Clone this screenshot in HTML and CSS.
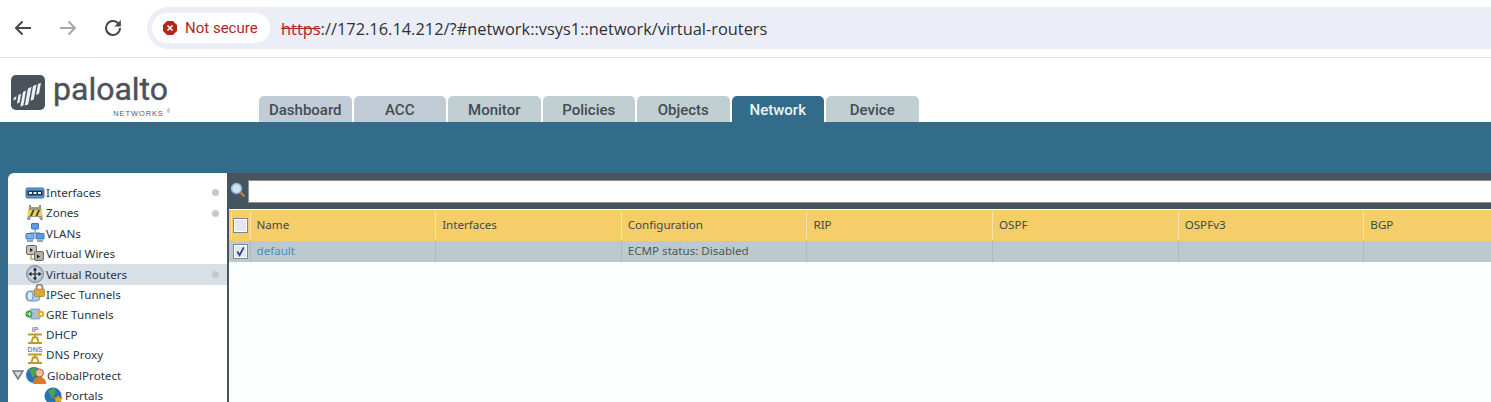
FILE: index.html
```html
<!DOCTYPE html>
<html lang="en">
<head>
    <meta charset="UTF-8">
    <title>Virtual Routers</title>
    <link rel="stylesheet" href="styles.css">
</head>
<body>

<div class="toolbar">
    <svg class="nav-icon" viewBox="0 0 24 24"><path d="M20 12H5M11.500 5.500L5 12l6.500 6.500" fill="none" stroke="#474747" stroke-width="2"/></svg>
    <svg class="nav-icon" viewBox="0 0 24 24"><path d="M4 12h15M12.500 5.500L19 12l-6.500 6.500" fill="none" stroke="#a8a8a8" stroke-width="2"/></svg>
    <svg class="nav-icon" viewBox="0 0 24 24"><path d="M19 12a7 7 0 1 1-2.200-5.100L19 9" fill="none" stroke="#474747" stroke-width="2"/><path d="M19.800 4v6.400h-6.400z" fill="#474747"/></svg>
    <div class="omnibox">
        <div class="chip">
            <svg class="chip-icon" viewBox="0 0 16 16"><path d="M5 1h6l4 4v6l-4 4H5l-4-4V5z" fill="#b3261e"/><path d="M5.500 5.500l5 5M10.500 5.500l-5 5" stroke="#fff" stroke-width="1.500"/></svg>
            <span>Not secure</span>
        </div>
        <div class="url"><span class="scheme">https</span>://172.16.14.212/?#network::vsys1::network/virtual-routers</div>
    </div>
</div>

<div class="top">
    <div class="logo">
        <svg class="logo-mark" width="34" height="35" viewBox="0 0 34 35">
            <rect width="34" height="35" rx="5" fill="#4a535c"/>
            <g fill="#eef0f1">
                <path d="M3 22.500l2.500-1-.7 3-2.500.8z"/>
                <path d="M7.500 20l2.600-1.200-1.600 9-2.600.8z"/>
                <path d="M12 17l3-1.500-2.600 15-3 1z"/>
                <path d="M17 13.500l3.500-1.700-3.300 17.700-3.400 1z"/>
                <path d="M22 11l3.500-1.500-2.800 15-3.200 1.300z"/>
                <path d="M27 9l3-1.200-2 11-3 1.300z"/>
            </g>
        </svg>
        <div class="logo-text">
            <div class="logo-name">paloalto</div>
            <div class="logo-sub">NETWORKS<sup>®</sup></div>
        </div>
    </div>
    <div class="tabs">
        <div class="tab tab-b">Dashboard</div>
        <div class="tab tab-b">ACC</div>
        <div class="tab">Monitor</div>
        <div class="tab">Policies</div>
        <div class="tab">Objects</div>
        <div class="tab active">Network</div>
        <div class="tab">Device</div>
    </div>
</div>

<div class="band"></div>

<div class="content">
    <div class="sidebar">
        <div class="item"><svg class="ico" viewBox="0 0 20 20"><rect x="1" y="5" width="18" height="10" rx="1.500" fill="#5d9bd6" stroke="#3b6ea5"/><rect x="2.500" y="7.500" width="15" height="5" fill="#23344e"/><path d="M4 9h3v2H4zM8.500 9h3v2h-3zM13 9h3v2h-3z" fill="#e8eef5"/></svg><span>Interfaces</span><i class="dot"></i></div>
        <div class="item"><svg class="ico" viewBox="0 0 20 20"><path d="M4 2h2v2H4zM14 2h2v2h-2z" fill="#8a8a82"/><path d="M2 17l2-13h12l2 13h-3l-1-3H6l-1 3z" fill="#9a9a90"/><path d="M3.500 7h13l.6 6H2.900z" fill="#ecd24a"/><path d="M5 13l2.500-6h2L7 13zM10.500 13l2.500-6h2l-2.500 6z" fill="#4a4636"/></svg><span>Zones</span><i class="dot"></i></div>
        <div class="item"><svg class="ico" viewBox="0 0 20 20"><path d="M10 6v4M5 12v-2h10v2" fill="none" stroke="#5a7ea8"/><rect x="6.500" y="0.500" width="7" height="5.500" rx="0.500" fill="#5b9be0" stroke="#3f77b5"/><rect x="1" y="10.500" width="8" height="5.500" rx="0.500" fill="#78b4ee" stroke="#3f77b5"/><rect x="11" y="10.500" width="8" height="5.500" rx="0.500" fill="#5b9be0" stroke="#3f77b5"/><path d="M2 18h6M12 18h6" stroke="#8fa6bd" stroke-width="2"/></svg><span>VLANs</span></div>
        <div class="item"><svg class="ico" viewBox="0 0 20 20"><path d="M6 12v4h5" fill="none" stroke="#c7a83c" stroke-width="1.500"/><rect x="1.500" y="2.500" width="10" height="9" rx="1.500" fill="#c4c2b8" stroke="#6b6b66"/><rect x="9.500" y="8.500" width="9" height="9" rx="1.500" fill="#b3b1a7" stroke="#6b6b66"/><path d="M5 5l3 2-3 2zM12 11.500l3 2-3 2z" fill="#1f1f1f"/></svg><span>Virtual Wires</span></div>
        <div class="item selected"><svg class="ico" viewBox="0 0 20 20"><circle cx="10" cy="10" r="8.500" fill="#b5bfcc" stroke="#7c8797"/><circle cx="10" cy="10" r="6" fill="#d5dbe3"/><path d="M10 3.500l2.200 3H7.800zM10 16.500l2.200-3H7.800zM3.500 10l3-2.200v4.400zM16.500 10l-3-2.200v4.400z" fill="#1a212b"/><path d="M6 10h8M10 6v8" stroke="#1a212b" stroke-width="1.200"/></svg><span>Virtual Routers</span><i class="dot"></i></div>
        <div class="item"><svg class="ico" viewBox="0 0 20 20"><rect x="1" y="7" width="14" height="10" rx="4" fill="#a9cbec" stroke="#6d93bd"/><ellipse cx="5" cy="12" rx="3" ry="4.500" fill="#dbeafa" stroke="#6d93bd"/><path d="M11.500 5V3.500a3 3 0 0 1 6 0V5" fill="none" stroke="#8b7a60" stroke-width="1.600"/><rect x="9.500" y="5" width="10" height="7.500" rx="1" fill="#dba63d" stroke="#a97a22" stroke-width="0.700"/></svg><span>IPSec Tunnels</span></div>
        <div class="item"><svg class="ico" viewBox="0 0 20 20"><rect x="5" y="5" width="10" height="10" rx="1" fill="#a9c0d8" stroke="#6d8db0" stroke-width="0.700"/><circle cx="4" cy="10" r="3.500" fill="#3aa044"/><path d="M2 10h4M4 8l2 2-2 2" fill="none" stroke="#d6f0d6"/><circle cx="16" cy="10" r="3.300" fill="#e3ae2f"/><circle cx="16" cy="10" r="1.200" fill="#fff3c8"/></svg><span>GRE Tunnels</span></div>
        <div class="item"><svg class="ico" viewBox="0 0 20 20"><text x="10" y="6.500" class="ico-text">IP</text><path d="M3 9.500h14M10 9.500v3M6.500 17l1.500-4.500h4l1.500 4.500M3 18h14" fill="none" stroke="#c09a22" stroke-width="1.800"/></svg><span>DHCP</span></div>
        <div class="item"><svg class="ico" viewBox="0 0 20 20"><text x="10" y="6.500" class="ico-text">DNS</text><path d="M3 9.500h14M10 9.500v3M6.500 17l1.500-4.500h4l1.500 4.500M3 18h14" fill="none" stroke="#c09a22" stroke-width="1.800"/></svg><span>DNS Proxy</span></div>
        <div class="item"><svg class="arrow" viewBox="0 0 12 10"><path d="M1 1h10L6 9z" fill="#d8d8d8" stroke="#777" stroke-width="1.500"/></svg><svg class="ico" viewBox="0 0 20 20"><circle cx="8" cy="10" r="8" fill="#2673b8"/><path d="M3 5l6-3 2 4-4 7z" fill="#4fa34a"/><path d="M7 19c0-5 3-7 6.500-7s6.500 2 6.500 7z" fill="#d9792a"/><circle cx="13.500" cy="8" r="4" fill="#ecc29a" stroke="#a8622a"/></svg><span>GlobalProtect</span></div>
        <div class="item sub"><svg class="ico" viewBox="0 0 20 20"><circle cx="9" cy="10" r="8.500" fill="#2673b8"/><path d="M4 5l6-3 2 4-4 7z" fill="#4fa34a"/><path d="M14 9l1.500 2.500 3 .2-2 2.200.7 3-3.200-1.300-3 1.300.7-3-2-2.200 3-.2z" fill="#e0a92e" stroke="#a97a22" stroke-width="0.600"/></svg><span>Portals</span></div>
    </div>

    <div class="main">
        <div class="searchbar">
            <svg class="search-ico" viewBox="0 0 16 16"><circle cx="6.500" cy="6.500" r="5" fill="#cfe3f7" stroke="#8fb4d8" stroke-width="1.500"/><path d="M10.500 10.500l4 4" stroke="#c08a3a" stroke-width="2.200"/></svg>
            <div class="search-input"></div>
        </div>
        <div class="grid">
            <div class="grid-row head">
                <div class="cell check"><span class="box"></span></div>
                <div class="cell">Name</div>
                <div class="cell">Interfaces</div>
                <div class="cell">Configuration</div>
                <div class="cell">RIP</div>
                <div class="cell">OSPF</div>
                <div class="cell">OSPFv3</div>
                <div class="cell">BGP</div>
            </div>
            <div class="grid-row body">
                <div class="cell check"><span class="box"><svg viewBox="0 0 14 14"><path d="M3.500 7l2.500 4L10.500 2.500" fill="none" stroke="#2b3a9c" stroke-width="1.800"/></svg></span></div>
                <div class="cell link">default</div>
                <div class="cell"></div>
                <div class="cell">ECMP status: Disabled</div>
                <div class="cell"></div>
                <div class="cell"></div>
                <div class="cell"></div>
                <div class="cell"></div>
            </div>
        </div>
    </div>
</div>

</body>
</html>
```

FILE: styles.css
```css
html, body {
    margin: 0;
    height: 402px;
    overflow: hidden;
    background: #fff;
}
body {
    font-family: "Noto Sans", "Open Sans", sans-serif;
    font-size: 11.600px;
    color: #333;
}

/* browser bar */
.toolbar {
    height: 58px;
    box-sizing: border-box;
    border-bottom: 1px solid #e2e2e2;
    padding: 7px 0 0 11px;
    display: flex;
    align-items: flex-start;
}
.nav-icon {
    width: 24px;
    height: 24px;
    margin: 9px 21px 0 0;
}
.omnibox {
    flex: 1;
    height: 42px;
    margin-left: 1px;
    background: #ebeef7;
    border-radius: 21px 0 0 21px;
    display: flex;
    align-items: center;
    padding-left: 5px;
}
.chip {
    width: 118px;
    height: 30px;
    box-sizing: border-box;
    background: #fff;
    border-radius: 15px;
    display: flex;
    align-items: center;
    padding-left: 10px;
    color: #b3261e;
    font-family: Roboto, sans-serif;
    font-size: 15px;
}
.chip-icon {
    width: 16px;
    height: 16px;
    margin-right: 7px;
}
.url {
    margin-left: 11px;
    font-family: "Open Sans", sans-serif;
    font-size: 16.400px;
    color: #2f3136;
}
.scheme {
    color: #b3261e;
    text-decoration: line-through;
}

/* logo + tabs */
.top {
    height: 64px;
    display: flex;
}
.logo {
    width: 259px;
    box-sizing: border-box;
    padding: 14px 0 0 11px;
    display: flex;
}
.logo-mark {
    margin-top: 3px;
}
.logo-text {
    margin-left: 8px;
    width: 115px;
    color: #4a535c;
}
.logo-name {
    font-family: Roboto, sans-serif;
    font-size: 32px;
    line-height: 32px;
    margin-top: 1px;
    -webkit-text-stroke: 0.4px #4a535c;
}
.logo-sub {
    font-family: "Liberation Sans", sans-serif;
    font-size: 7.500px;
    line-height: 8px;
    letter-spacing: 0.900px;
    text-align: right;
    margin-top: 5px;
    margin-right: -3px;
    color: #565d63;
}
.logo-sub sup {
    font-size: 4.500px;
    line-height: 0;
    margin-left: 3px;
}
.tabs {
    display: flex;
    gap: 2px;
    align-self: flex-end;
}
.tab {
    width: 92.500px;
    height: 26px;
    box-sizing: border-box;
    padding-top: 5px;
    background: #bfcfd2;
    border-radius: 5px 5px 0 0;
    font-family: Roboto, sans-serif;
    font-size: 15px;
    font-weight: 500;
    color: #444c52;
    text-align: center;
}
.tab-b {
    background: #c2ccd6;
}
.active {
    background: #336b8a;
    color: #eef3f6;
}
.band {
    height: 50px;
    background: #336b8a;
}

/* sidebar + table */
.content {
    display: flex;
    height: 230px;
    background: #336b8a;
    padding-left: 8px;
    padding-top: 1px;
}
.sidebar {
    width: 219px;
    height: 229px;
    background: #fff;
    border-top-left-radius: 6px;
    padding-top: 9.400px;
    box-sizing: border-box;
    flex-shrink: 0;
}
.item {
    height: 20.300px;
    display: flex;
    align-items: center;
    padding-left: 17px;
    position: relative;
    color: #2b3640;
}
.item.selected {
    background: #d6e0e6;
    height: 21px;
    margin-bottom: -0.700px;
}
.item.sub {
    padding-left: 36px;
}
.item:has(.arrow) {
    padding-left: 4px;
}
.ico {
    width: 20px;
    height: 20px;
    margin-right: 1px;
    flex-shrink: 0;
}
.ico-text {
    font-family: "Liberation Sans", sans-serif;
    font-size: 7px;
    font-weight: bold;
    fill: #6f8fb5;
    text-anchor: middle;
}
.arrow {
    width: 12px;
    height: 10px;
    margin-right: 2px;
}
.dot {
    position: absolute;
    right: 8px;
    top: 7px;
    width: 7px;
    height: 7px;
    border-radius: 50%;
    background: #c8c8c8;
}
.main {
    flex: 1;
    background: #fcfdfd;
    border-left: 2px solid #46545f;
    min-width: 0;
}
.searchbar {
    height: 36px;
    background: #46545f;
    display: flex;
    box-sizing: border-box;
    padding-top: 7px;
}
.search-ico {
    width: 16px;
    height: 16px;
    margin: 2px 2px 0 1px;
    flex-shrink: 0;
}
.search-input {
    flex: 1;
    height: 23px;
    background: #fff;
    border: 1px solid #8b9094;
    border-right: 0;
    box-sizing: border-box;
}
.grid {
    padding-top: 1px;
}
.grid-row {
    display: grid;
    padding-left: 2px;
    grid-template-columns: 18.500px repeat(7, 185.650px);
}
.head {
    height: 31px;
    background: #f5ce69;
    color: #3a4a4c;
}
.body {
    height: 21px;
    background: #bccacf;
    color: #4c5a50;
}
.cell {
    padding-left: 6px;
    display: flex;
    align-items: center;
    box-sizing: border-box;
    white-space: nowrap;
}
.head .cell {
    border-left: 1px solid #fbe6ad;
    margin: 2px 0;
    padding-bottom: 2px;
}
.body .cell {
    border-left: 1px solid #a9bac2;
    padding-bottom: 2px;
}
.head .cell.check {
    padding: 0 0 0 1px;
}
.body .cell.check {
    border-left: 0;
    padding: 0 0 0 2px;
}
.box {
    width: 15px;
    height: 15px;
    box-sizing: border-box;
    border: 1px solid #80868a;
    box-shadow: inset 0 0 0 1px #fff;
    background: #e4e7ee;
    display: block;
    flex-shrink: 0;
}
.box svg {
    display: block;
    width: 13px;
    height: 13px;
}
.link {
    color: #4a8fb5;
}
```
